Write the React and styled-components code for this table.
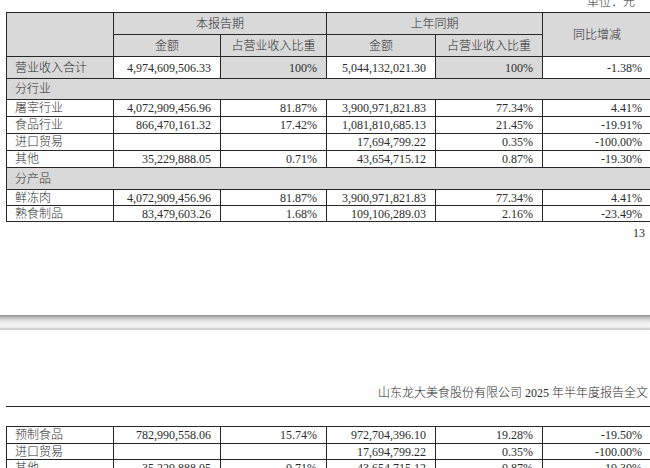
import React from 'react'
import styled, { createGlobalStyle } from 'styled-components'

const GlobalStyle = createGlobalStyle`
  html, body {
    margin: 0;
    padding: 0;
    background: #fff;
  }
  body {
    width: 650px;
    height: 468px;
    overflow: hidden;
    font-family: "Liberation Serif", "Noto Sans CJK SC", serif;
    color: #2b2b2b;
  }
`

const S = {}

S.Sheet = styled.div`
  width: 650px;
  height: 468px;
  overflow: hidden;
  display: flex;
  flex-direction: column;
`

S.PageTop = styled.section`
  padding-left: 6px;
  height: 315px;
  flex-shrink: 0;
  display: flex;
  flex-direction: column;
`

S.Unit = styled.div`
  margin-top: -4px;
  height: 16px;
  line-height: 12px;
  font-size: 12px;
  font-weight: 300;
  text-align: right;
  padding-right: 15px;
`

S.PageNo = styled.div`
  margin-top: 5px;
  font-size: 12px;
  line-height: 12px;
  text-align: right;
  padding-right: 5px;
`

S.Gap = styled.div`
  height: 15px;
  flex-shrink: 0;
  background: linear-gradient(
    to bottom,
    #8a8a8a 0px,
    #b4b4b4 2px,
    #dcdcdc 5px,
    #efefef 8px,
    #f4f4f4 12px,
    #c9c9c9 14px,
    #d6d6d6 15px
  );
`

S.PageBottom = styled.section`
  padding-left: 6px;
  display: flex;
  flex-direction: column;
`

S.RunningHead = styled.div`
  margin-top: 51px;
  height: 20px;
  border-bottom: 1px solid #222;
  font-size: 12px;
  line-height: 14px;
  font-weight: 300;
  text-align: right;
  padding: 5px 2px 0 0;
  white-space: nowrap;
`

S.Spacer = styled.div`
  height: 19px;
`

S.Table = styled.table`
  width: 645px;
  table-layout: fixed;
  border-collapse: collapse;
  font-size: 12px;
  font-weight: 300;
`

S.Col = styled.col`
  width: ${p => p.$w}px;
`

S.Cell = styled.td`
  border: 1px solid #262626;
  padding: 0 9px 0 8px;
  height: ${p => p.$h || 16}px;
  line-height: 12px;
  white-space: nowrap;
  overflow: hidden;
  text-align: ${p => p.$align || 'right'};
  background: ${p => (p.$shade ? '#d9d9d9' : '#fff')};
  vertical-align: middle;
`

S.Head = styled(S.Cell).attrs({ as: 'th' })`
  font-weight: 300;
  text-align: center;
  background: #d9d9d9;
  padding: 0;
`

const widths = [107, 107, 106, 109, 107, 109]

const Cols = () => (
  <colgroup>
    {widths.map((w, i) => <S.Col key={i} $w={w} />)}
  </colgroup>
)

const DataRow = ({ row, h, total }) => (
  <tr>
    <S.Cell $align='left' $h={h} $shade={total}>{row[0]}</S.Cell>
    <S.Cell $h={h}>{row[1]}</S.Cell>
    <S.Cell $h={h} $shade={total}>{row[2]}</S.Cell>
    <S.Cell $h={h}>{row[3]}</S.Cell>
    <S.Cell $h={h} $shade={total}>{row[4]}</S.Cell>
    <S.Cell $h={h}>{row[5]}</S.Cell>
  </tr>
)

const SectionRow = ({ label, h }) => (
  <tr>
    <S.Cell colSpan={6} $align='left' $h={h} $shade>{label}</S.Cell>
  </tr>
)

const industry = [
  ['屠宰行业', '4,072,909,456.96', '81.87%', '3,900,971,821.83', '77.34%', '4.41%'],
  ['食品行业', '866,470,161.32', '17.42%', '1,081,810,685.13', '21.45%', '-19.91%'],
  ['进口贸易', '', '', '17,694,799.22', '0.35%', '-100.00%'],
  ['其他', '35,229,888.05', '0.71%', '43,654,715.12', '0.87%', '-19.30%']
]

const products = [
  ['鲜冻肉', '4,072,909,456.96', '81.87%', '3,900,971,821.83', '77.34%', '4.41%'],
  ['熟食制品', '83,479,603.26', '1.68%', '109,106,289.03', '2.16%', '-23.49%']
]

const continued = [
  ['预制食品', '782,990,558.06', '15.74%', '972,704,396.10', '19.28%', '-19.50%'],
  ['进口贸易', '', '', '17,694,799.22', '0.35%', '-100.00%'],
  ['其他', '35,229,888.05', '0.71%', '43,654,715.12', '0.87%', '-19.30%']
]

const App = () => (
  <S.Sheet>
    <GlobalStyle />
    <S.PageTop>
      <S.Unit>单位：元</S.Unit>
      <S.Table>
        <Cols />
        <thead>
          <tr>
            <S.Head rowSpan={2} />
            <S.Head colSpan={2} $h={21}>本报告期</S.Head>
            <S.Head colSpan={2} $h={21}>上年同期</S.Head>
            <S.Head rowSpan={2}>同比增减</S.Head>
          </tr>
          <tr>
            <S.Head $h={21}>金额</S.Head>
            <S.Head $h={21}>占营业收入比重</S.Head>
            <S.Head $h={21}>金额</S.Head>
            <S.Head $h={21}>占营业收入比重</S.Head>
          </tr>
        </thead>
        <tbody>
          <DataRow
            total
            h={21}
            row={['营业收入合计', '4,974,609,506.33', '100%', '5,044,132,021.30', '100%', '-1.38%']}
          />
          <SectionRow label='分行业' h={20} />
          {industry.map(r => <DataRow key={r[0]} row={r} h={16} />)}
          <SectionRow label='分产品' h={21} />
          {products.map(r => <DataRow key={r[0]} row={r} h={15} />)}
        </tbody>
      </S.Table>
      <S.PageNo>13</S.PageNo>
    </S.PageTop>
    <S.Gap />
    <S.PageBottom>
      <S.RunningHead>山东龙大美食股份有限公司 2025 年半年度报告全文</S.RunningHead>
      <S.Spacer />
      <S.Table>
        <Cols />
        <tbody>
          {continued.map((r, i) => <DataRow key={r[0]} row={r} h={i === 0 ? 16 : 15} />)}
        </tbody>
      </S.Table>
    </S.PageBottom>
  </S.Sheet>
)

export default App
